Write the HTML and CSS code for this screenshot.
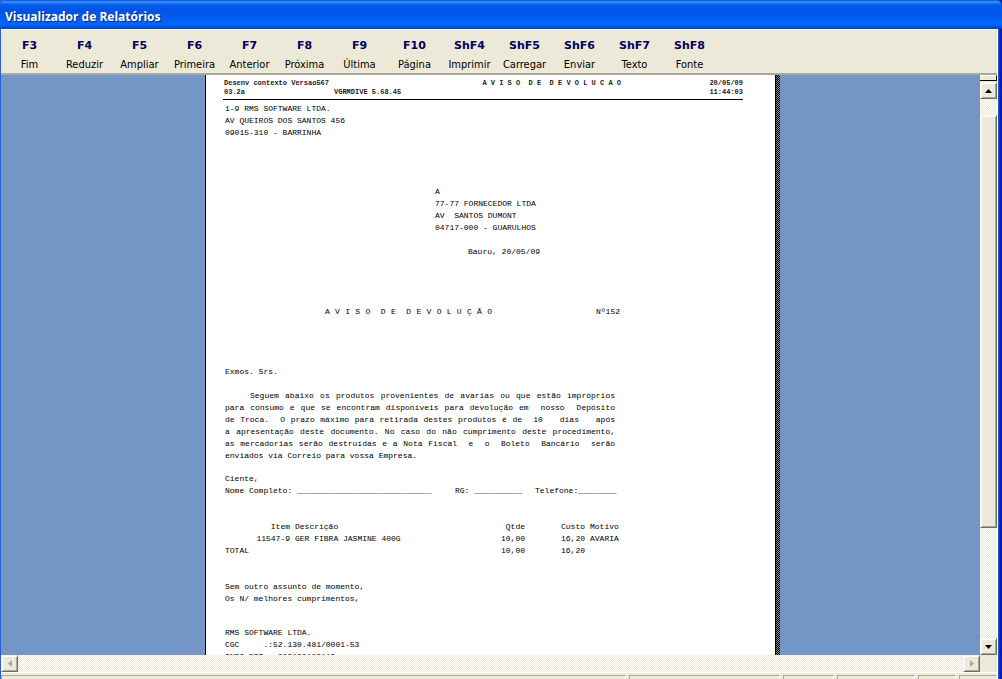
FILE: index.html
```html
<!DOCTYPE html>
<html lang="pt-BR">
<head>
<meta charset="utf-8">
<title>Visualizador de Relatórios</title>
<link rel="stylesheet" href="styles.css">
</head>
<body class="window">
<header class="titlebar"><h1 class="title">Visualizador de Relatórios</h1></header>
<div class="client">
<nav class="toolbar" aria-label="Comandos">
<button class="tool"><b class="key">F3</b><span>Fim</span></button>
<button class="tool"><b class="key">F4</b><span>Reduzir</span></button>
<button class="tool"><b class="key">F5</b><span>Ampliar</span></button>
<button class="tool"><b class="key">F6</b><span>Primeira</span></button>
<button class="tool"><b class="key">F7</b><span>Anterior</span></button>
<button class="tool"><b class="key">F8</b><span>Próxima</span></button>
<button class="tool"><b class="key">F9</b><span>Última</span></button>
<button class="tool"><b class="key">F10</b><span>Página</span></button>
<button class="tool"><b class="key">ShF4</b><span>Imprimir</span></button>
<button class="tool"><b class="key">ShF5</b><span>Carregar</span></button>
<button class="tool"><b class="key">ShF6</b><span>Enviar</span></button>
<button class="tool"><b class="key">ShF7</b><span>Texto</span></button>
<button class="tool"><b class="key">ShF8</b><span>Fonte</span></button>
</nav>
<div class="viewer">
<main class="desk">
<article class="page">
<header class="page-head">
<span>Desenv contexto Versao567</span><span class="head-end">A V I S O  D E  D E V O L U C A O</span><span class="head-end">20/05/09</span>
<span>03.2a</span><span>VGRMDIVE 5.68.45</span><span class="head-end">11:44:03</span>
</header>
<div class="report">
<pre class="block">1-9 RMS SOFTWARE LTDA.
AV QUEIROS DOS SANTOS 456
09015-310 - BARRINHA</pre>
<div class="addressee">
<pre class="block">A
77-77 FORNECEDOR LTDA
AV  SANTOS DUMONT
04717-000 - GUARULHOS</pre>
<p class="dateline">Bauru, 20/05/09</p>
</div>
<div class="heading"><pre class="block">A V I S O  D E  D E V O L U Ç Ã O</pre><span>Nº152</span></div>
<p class="block letter">Exmos. Srs.</p>
<p class="block body-text">Seguem abaixo os produtos provenientes de avarias ou que estão impróprios
para consumo e que se encontram disponíveis para devolução em  nosso  Depósito
de Troca.  O prazo máximo para retirada destes produtos é de  10   dias   após
a apresentação deste documento. No caso do não cumprimento deste procedimento,
as mercadorias serão destruídas e a Nota Fiscal  e  o  Boleto  Bancário  serão</p>
<p class="block">enviados via Correio para vossa Empresa.</p>
<p class="block sign-intro">Ciente,</p>
<div class="signature">
<span>Nome Completo: ____________________________</span><span>RG: __________</span><span>Telefone:________</span>
</div>
<table class="items">
<thead><tr><th class="num">Item</th><th>Descrição</th><th class="num">Qtde</th><th class="num">Custo</th><th>Motivo</th></tr></thead>
<tbody><tr><td class="num">11547-9</td><td>GER FIBRA JASMINE 400G</td><td class="num">10,00</td><td class="num">16,20</td><td>AVARIA</td></tr></tbody>
<tfoot><tr><td>TOTAL</td><td></td><td class="num">10,00</td><td class="num">16,20</td><td></td></tr></tfoot>
</table>
<pre class="block closing">Sem outro assunto de momento,
Os N/ melhores cumprimentos,</pre>
<pre class="block company">RMS SOFTWARE LTDA.
CGC     .:52.130.481/0001-53
INSC EST .:209100109115</pre>
</div>
</article>
</main>
<div class="vscroll">
<div class="splitter"></div>
<button class="arrow" aria-label="Rolar para cima"><svg width="7" height="4" viewBox="0 0 7 4"><path d="M0 4L3.5 0L7 4Z"/></svg></button>
<div class="track"><div class="thumb"></div></div>
<button class="arrow" aria-label="Rolar para baixo"><svg width="7" height="4" viewBox="0 0 7 4"><path d="M0 0H7L3.5 4Z"/></svg></button>
</div>
</div>
<div class="hscroll">
<button class="arrow off" disabled aria-label="Rolar para a esquerda"><svg width="4" height="7" viewBox="0 0 4 7"><path d="M4 0V7L0 3.5Z"/></svg></button>
<div class="htrack"></div>
<button class="arrow off" disabled aria-label="Rolar para a direita"><svg width="4" height="7" viewBox="0 0 4 7"><path d="M0 0V7L4 3.5Z"/></svg></button>
<div class="corner"></div>
</div>
<footer class="status"><i></i><i></i><i></i><i></i><i></i><i></i></footer>
</div>
</body>
</html>
```
FILE: styles.css
```css
* { box-sizing: border-box; }
.window {
  margin: 0;
  height: 100vh;
  display: flex;
  flex-direction: column;
  overflow: hidden;
  background: linear-gradient(to left, #001a90 0, #0628b8 2px, #2a60e0 4px);
  font: 11px "DejaVu Sans Condensed", "DejaVu Sans", sans-serif;
  color: #000;
}
.titlebar {
  flex: none;
  height: 29px;
  padding: 0 5px;
  display: flex;
  align-items: center;
  border-radius: 6px 6px 0 0;
  background: linear-gradient(#0a50d8 0, #3d95ff 2px, #0a62ee 4px, #0054e3 9px, #0058ea 16px, #0066ff 22px, #0062f8 25px, #0040c0 29px);
}
.title {
  margin: 3px 0 0;
  font: bold 12px "Open Sans", sans-serif;
  color: #fff;
  text-shadow: 1px 1px 1px #0a2a80;
}
.client {
  flex: 1;
  min-height: 0;
  display: flex;
  flex-direction: column;
  margin: 0 4px 0 0;
  border-left: 1px solid #2a5fd0;
  border-right: 1px solid #fff;
  background: #ece9d8;
}
.toolbar {
  flex: none;
  display: flex;
  height: 46px;
  padding: 6px 0 0 1px;
  border-top: 1px solid #fff;
  border-bottom: 2px solid #aca899;
}
.tool {
  width: 55px;
  height: 36px;
  padding: 0;
  border: 0;
  background: none;
  display: flex;
  flex-direction: column;
  align-items: center;
  font: inherit;
  line-height: 19px;
  color: #000;
  white-space: nowrap;
}
.key { font: bold 11px/19px "DejaVu Sans", sans-serif; color: #00005a; }
.viewer { flex: 1; min-height: 0; display: flex; }
.desk {
  flex: 1;
  min-width: 0;
  overflow: hidden;
  display: flex;
  justify-content: center;
  padding-left: 4px;
  background: #7396c6;
}
.page {
  width: 575px;
  height: 800px;
  flex: none;
  padding: 3px 33px 0 17px;
  border-left: 1px solid #000;
  border-right: 4px solid transparent;
  background:
    linear-gradient(#fff, #fff) padding-box,
    repeating-conic-gradient(#000 0 25%, #7c7c7c 0 50%) 0 0 / 2px 2px border-box;
  box-shadow: inset -1px 0 #000;
}
.page-head {
  display: grid;
  grid-template-columns: 110px 1fr 122px;
  align-content: end;
  height: 22px;
  padding: 0 0 2px 1px;
  border-bottom: 1px solid #000;
  font: bold 7px/9px "Liberation Mono", monospace;
  color: #222;
  white-space: pre;
}
.head-end { justify-self: end; }
.report {
  padding: 3px 0 0 2px;
  font: 8px/12px "Liberation Mono", monospace;
}
.block { margin: 0; font: inherit; }
.addressee { margin: 47px 0 0 210px; width: 105px; }
.dateline { margin: 12px 0 0; text-align: right; }
.heading { display: flex; justify-content: space-between; width: 395px; padding-left: 100px; margin-top: 48px; }
.heading .block { width: 167px; text-align-last: justify; white-space: pre-wrap; }
.letter { margin-top: 48px; }
.body-text {
  width: 390px;
  margin-top: 12px;
  text-indent: 25px each-line;
  text-indent: 25px;
  text-align: justify;
  text-align-last: justify;
  white-space: pre-wrap;
}
.sign-intro { margin-top: 11px; }
.signature { display: grid; grid-template-columns: 230px 80px 85px; width: 395px; }
.items {
  width: 395px;
  margin-top: 24px;
  table-layout: fixed;
  border-collapse: collapse;
  font: inherit;
}
.items th, .items td { padding: 0; font-weight: normal; text-align: left; white-space: nowrap; }
.items .num { text-align: right; }
.items th:nth-child(1) { width: 65px; }
.items th:nth-child(3) { width: 50px; }
.items th:nth-child(4) { width: 60px; }
.items th:nth-child(5) { width: 35px; }
.items th:nth-child(2), .items td:nth-child(2), .items th:nth-child(5), .items td:nth-child(5) { padding-left: 5px; }
.closing { margin-top: 24px; }
.company { margin-top: 22px; }
.vscroll { flex: none; width: 17px; display: flex; flex-direction: column; background: #ece9d8; }
.splitter { height: 6px; margin-bottom: 1px; border-top: 1px solid #fff; border-bottom: 1px solid #000; border-right: 1px solid #000; background: #ece9d8; }
.arrow {
  flex: none;
  width: 17px;
  height: 17px;
  padding: 0;
  display: grid;
  place-items: center;
  border: 1px solid;
  border-color: #f6f4ec #716f64 #716f64 #f6f4ec;
  box-shadow: inset 1px 1px #fff, inset -1px -1px #aca899;
  background: #ece9d8;
}
.off svg { fill: #aca899; }
.track, .htrack {
  flex: 1;
  background: repeating-conic-gradient(#fff 0 25%, #ece9d8 0 50%) 0 0 / 2px 2px;
}
.track { padding-top: 16px; }
.thumb {
  height: 79%;
  border: 1px solid;
  border-color: #f6f4ec #716f64 #716f64 #f6f4ec;
  box-shadow: inset 1px 1px #fff, inset -1px -1px #aca899;
  background: #ece9d8;
}
.hscroll { flex: none; height: 17px; display: flex; }
.corner { width: 17px; background: #ece9d8; }
.status {
  flex: none;
  height: 7px;
  padding-top: 2px;
  display: grid;
  grid-template-columns: 1fr 151px 51px 78px 38px 38px;
  gap: 3px;
  border-top: 1px solid #fff;
}
.status i { border: 1px solid #aca899; border-right-color: #fff; border-bottom: 0; }
```
